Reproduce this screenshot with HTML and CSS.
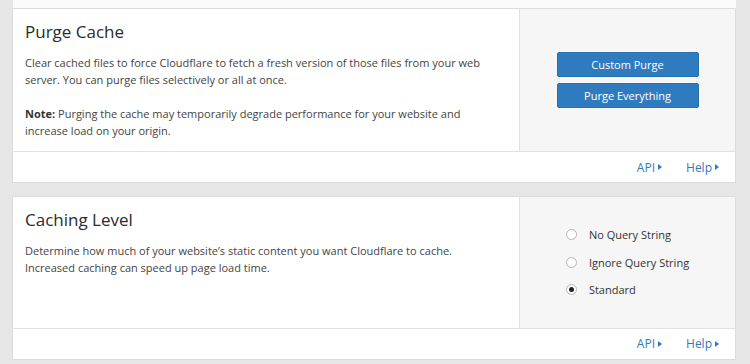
FILE: index.html
```html
<!DOCTYPE html>
<html lang="en">
<head>
  <meta charset="UTF-8">
  <title>Caching</title>
  <link rel="stylesheet" href="styles.css">
</head>
<body>
  <div class="top-strip"></div>

  <div class="card">
    <div class="card-body">
      <div class="card-main">
        <h2>Purge Cache</h2>
        <p>Clear cached files to force Cloudflare to fetch a fresh version of those files from your web server. You can purge files selectively or all at once.</p>
        <p><b>Note:</b> Purging the cache may temporarily degrade performance for your website and increase load on your origin.</p>
      </div>
      <div class="card-side">
        <div class="btn-stack">
          <button class="btn">Custom Purge</button>
          <button class="btn">Purge Everything</button>
        </div>
      </div>
    </div>
    <div class="card-foot">
      <a class="foot-link" href="#">API<span class="caret"></span></a>
      <a class="foot-link" href="#">Help<span class="caret"></span></a>
    </div>
  </div>

  <div class="card">
    <div class="card-body">
      <div class="card-main">
        <h2>Caching Level</h2>
        <p>Determine how much of your website’s static content you want Cloudflare to cache. Increased caching can speed up page load time.</p>
      </div>
      <div class="card-side">
        <div class="radio-list">
          <label class="radio"><input type="radio" name="level"><span>No Query String</span></label>
          <label class="radio"><input type="radio" name="level"><span>Ignore Query String</span></label>
          <label class="radio"><input type="radio" name="level" checked><span>Standard</span></label>
        </div>
      </div>
    </div>
    <div class="card-foot">
      <a class="foot-link" href="#">API<span class="caret"></span></a>
      <a class="foot-link" href="#">Help<span class="caret"></span></a>
    </div>
  </div>
</body>
</html>
```

FILE: styles.css
```css
body {
  margin: 0;
  padding: 0 14px 0 12px;
  background-color: #e6e6e6;
  font-family: "Open Sans", sans-serif;
  color: #333;
}
.top-strip {
  height: 8px;
  margin-left: 1px;
  background-color: #fafafa;
}
.card {
  background-color: #fff;
  border: 1px solid #dcdcdc;
  margin-bottom: 13px;
}
.card-body {
  display: flex;
  border-bottom: 1px solid #e2e2e2;
}
.card-main {
  flex: 1;
  padding: 11px 32px 12px 12px;
}
.card-main h2 {
  margin: 0 0 10px 0;
  font-size: 17px;
  font-weight: normal;
  line-height: 24px;
  color: #2b2b2b;
}
.card-main p {
  margin: 0 0 17px 0;
  font-size: 11px;
  line-height: 17px;
  color: #444;
}
.card-main p b {
  color: #333;
}
.card-main p:last-child {
  margin-bottom: 0;
}
.card-side {
  width: 215px;
  background-color: #f6f6f6;
  border-left: 1px solid #e2e2e2;
  display: flex;
  align-items: center;
  justify-content: center;
}
.btn-stack {
  display: flex;
  flex-direction: column;
  gap: 6px;
}
.btn {
  width: 142px;
  height: 25px;
  padding: 0;
  border: 1px solid #2a6fae;
  border-radius: 2px;
  background-color: #2f7bbf;
  color: #fff;
  font-family: "Open Sans", sans-serif;
  font-size: 11px;
  cursor: pointer;
}
.radio-list {
  padding: 24px 0;
}
.radio {
  display: flex;
  align-items: center;
  height: 27.5px;
  font-size: 11px;
  color: #333;
}
.radio input {
  appearance: none;
  -webkit-appearance: none;
  box-sizing: border-box;
  width: 11px;
  height: 11px;
  margin: 0 12px 0 0;
  border: 1px solid #b5b5b5;
  border-radius: 50%;
  background-color: #fff;
  display: flex;
  align-items: center;
  justify-content: center;
}
.radio input:checked::after {
  content: "";
  width: 5px;
  height: 5px;
  border-radius: 50%;
  background-color: #222;
}
.card-foot {
  display: flex;
  justify-content: flex-end;
  gap: 24px;
  height: 30px;
  align-items: center;
  padding-right: 16px;
}
.foot-link {
  font-size: 12px;
  color: #2f7bbf;
  text-decoration: none;
  display: flex;
  align-items: center;
}
.caret {
  display: inline-block;
  width: 0;
  height: 0;
  margin-left: 3px;
  border-top: 3.5px solid transparent;
  border-bottom: 3.5px solid transparent;
  border-left: 4px solid #2f7bbf;
}
```
